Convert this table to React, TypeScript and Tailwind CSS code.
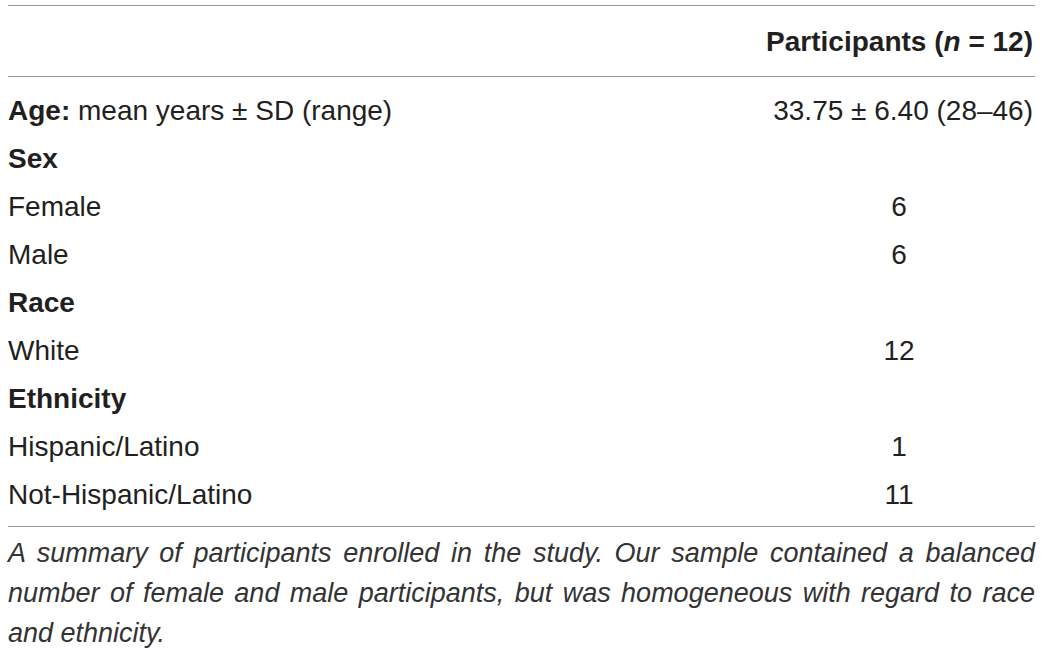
import React from 'react';

type Row = { label: React.ReactNode; value?: string; heading?: boolean };

const rows: Row[] = [
  {
    label: (
      <>
        <span className="font-bold">Age:</span> mean years ± SD (range)
      </>
    ),
    value: '33.75 ± 6.40 (28–46)',
  },
  { label: 'Sex', heading: true },
  { label: 'Female', value: '6' },
  { label: 'Male', value: '6' },
  { label: 'Race', heading: true },
  { label: 'White', value: '12' },
  { label: 'Ethnicity', heading: true },
  { label: 'Hispanic/Latino', value: '1' },
  { label: 'Not-Hispanic/Latino', value: '11' },
];

const caption = [
  'A summary of participants enrolled in the study. Our sample contained a balanced',
  'number of female and male participants, but was homogeneous with regard to race',
  'and ethnicity.',
];

export default function App() {
  return (
    <div className="w-[1044px] h-[650px] bg-white overflow-hidden pl-[8px] pr-[9px] pt-[5px] font-['Liberation_Sans',Arial,sans-serif] text-[28px] text-[#231f20]">
      {/* header */}
      <div className="flex items-center h-[72px] pt-[2px] border-y border-[#999]">
        <div className="flex-1" />
        <div className="w-[272px] text-right font-bold whitespace-nowrap pr-[2px]">
          Participants (<i>n</i> = 12)
        </div>
      </div>

      {/* body */}
      <div className="pt-[10px] pb-[7px] border-b border-[#999]">
        {rows.map((r, i) => (
          <div key={i} className="flex items-center h-[48px]">
            <div className={`flex-1 ${r.heading ? 'font-bold' : ''}`}>{r.label}</div>
            <div className={`w-[272px] whitespace-nowrap ${i === 0 ? 'text-right pr-[2px]' : 'text-center'}`}>
              {r.value}
            </div>
          </div>
        ))}
      </div>

      {/* caption */}
      <div className="mt-[6px] italic text-[27px] leading-[40px] text-[#333]">
        {caption.map((line, i) => (
          <div
            key={i}
            className={i < caption.length - 1 ? 'whitespace-nowrap text-justify [text-align-last:justify]' : ''}
          >
            {line}
          </div>
        ))}
      </div>
    </div>
  );
}
